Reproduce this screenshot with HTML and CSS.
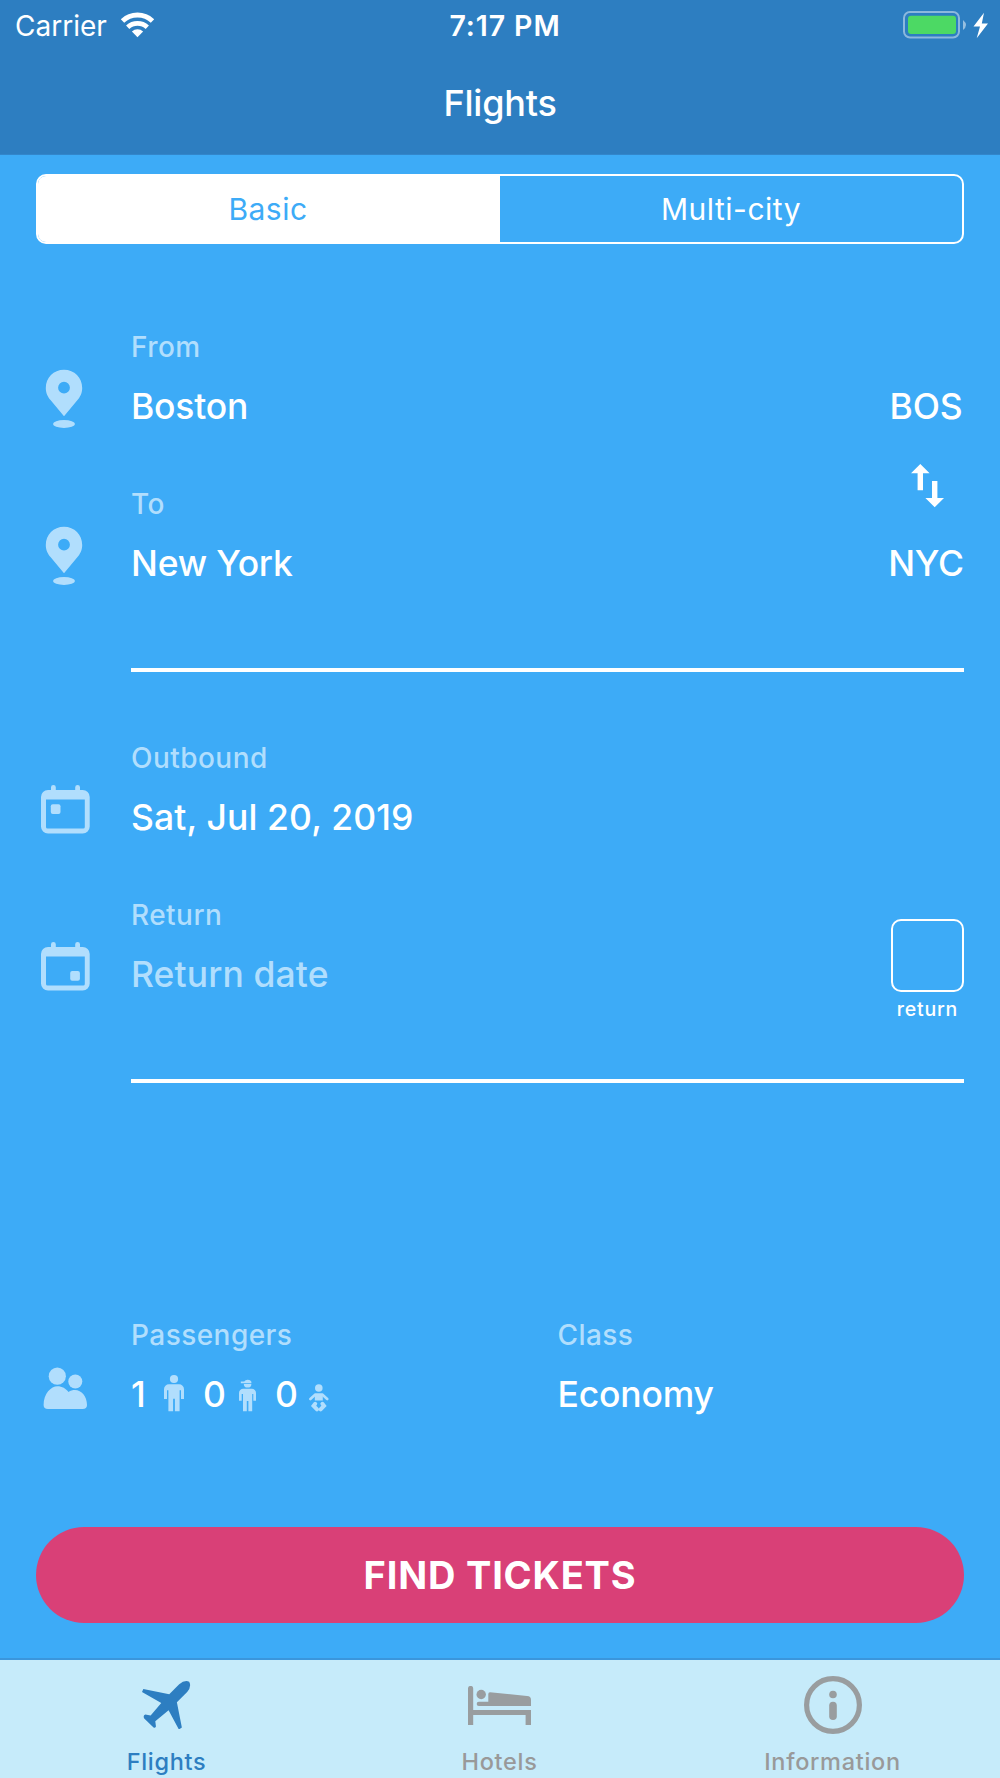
FILE: index.html
```html
<!DOCTYPE html>
<html lang="en">
<head>
  <meta charset="UTF-8">
  <meta name="viewport" content="width=device-width, initial-scale=1.0">
  <title>Flights</title>
  <link rel="stylesheet" href="styles.css">
</head>
<body>
  <header class="header">
    <div class="status-bar">
      <div class="status-left">
        <span class="carrier">Carrier</span>
        <svg class="wifi" width="35" height="26" viewBox="0 0 35 26">
          <path d="M2.5 9A22 22 0 0 1 32.5 9" fill="none" stroke="#fff" stroke-width="5"/>
          <path d="M7.7 15.2A14.4 14.4 0 0 1 27.3 15.2" fill="none" stroke="#fff" stroke-width="4.8"/>
          <path d="M17.5 25.3L11.9 19.4A8.5 8.5 0 0 1 23.1 19.4Z" fill="#fff"/>
        </svg>
      </div>
      <span class="clock">7:17 PM</span>
      <div class="status-right">
        <svg width="86" height="28" viewBox="0 0 86 28">
          <rect x="1" y="1" width="55" height="25.5" rx="6" fill="none" stroke="#fff" stroke-opacity=".45" stroke-width="2"/>
          <rect x="5" y="4.7" width="48" height="18.3" rx="3" fill="#4cd964"/>
          <path d="M60 9Q66 14 60 19Z" fill="#fff" fill-opacity=".5"/>
          <path d="M81 1.7L70.5 15.5H77L73.7 27.3L85 12.5H78.8Z" fill="#fff"/>
        </svg>
      </div>
    </div>
    <h1 class="title">Flights</h1>
  </header>

  <main class="content">
    <div class="segmented">
      <button class="segment active">Basic</button>
      <button class="segment">Multi-city</button>
    </div>

    <section class="group places">
      <div class="rows">
        <div class="row">
          <svg class="row-icon" viewBox="0 0 64 64">
            <path fill-rule="evenodd" d="M28 2.7C17.5 2.7 9.8 10.8 9.8 20.9C9.8 26.5 12 29.8 14.5 33L28 49.3L41.5 33C44 29.8 46.2 26.5 46.2 20.9C46.2 10.8 38.5 2.7 28 2.7ZM28 14.8A5.9 5.9 0 1 1 28 26.6A5.9 5.9 0 1 1 28 14.8Z"/>
            <ellipse cx="28" cy="57" rx="11" ry="3.9"/>
          </svg>
          <div class="field">
            <span class="label">From</span>
            <span class="value">Boston</span>
          </div>
        </div>
        <div class="row">
          <svg class="row-icon" viewBox="0 0 64 64">
            <path fill-rule="evenodd" d="M28 2.7C17.5 2.7 9.8 10.8 9.8 20.9C9.8 26.5 12 29.8 14.5 33L28 49.3L41.5 33C44 29.8 46.2 26.5 46.2 20.9C46.2 10.8 38.5 2.7 28 2.7ZM28 14.8A5.9 5.9 0 1 1 28 26.6A5.9 5.9 0 1 1 28 14.8Z"/>
            <ellipse cx="28" cy="57" rx="11" ry="3.9"/>
          </svg>
          <div class="field">
            <span class="label">To</span>
            <span class="value">New York</span>
          </div>
        </div>
      </div>
      <div class="codes">
        <span class="code">BOS</span>
        <svg class="swap" width="34" height="44" viewBox="0 0 34 44">
          <path d="M9.3 0L18.6 9.3H12V26.3H6.6V9.3H0Z"/>
          <path d="M23.7 43.3L14.4 34H21V17H26.4V34H33Z"/>
        </svg>
        <span class="code">NYC</span>
      </div>
    </section>

    <hr class="line">

    <section class="group dates">
      <div class="rows">
        <div class="row">
          <svg class="row-icon" viewBox="0 0 64 64">
            <path fill-rule="evenodd" d="M12 13H15V10.3A2.4 2.4 0 0 1 19.8 10.3V13H39.2V10.3A2.4 2.4 0 0 1 44 10.3V13H46.7A7 7 0 0 1 53.7 20V49.5A7 7 0 0 1 46.7 56.5H12A7 7 0 0 1 5 49.5V20A7 7 0 0 1 12 13ZM10 22.5V50A1.5 1.5 0 0 0 11.5 51.5H47.3A1.5 1.5 0 0 0 48.8 50V22.5Z"/>
            <rect x="14.8" y="27.3" width="9.7" height="9.7" rx="2"/>
          </svg>
          <div class="field">
            <span class="label">Outbound</span>
            <span class="value date">Sat, Jul 20, 2019</span>
          </div>
        </div>
        <div class="row">
          <svg class="row-icon" viewBox="0 0 64 64">
            <path fill-rule="evenodd" d="M12 13H15V10.3A2.4 2.4 0 0 1 19.8 10.3V13H39.2V10.3A2.4 2.4 0 0 1 44 10.3V13H46.7A7 7 0 0 1 53.7 20V49.5A7 7 0 0 1 46.7 56.5H12A7 7 0 0 1 5 49.5V20A7 7 0 0 1 12 13ZM10 22.5V50A1.5 1.5 0 0 0 11.5 51.5H47.3A1.5 1.5 0 0 0 48.8 50V22.5Z"/>
            <rect x="34.2" y="37" width="9.7" height="9.7" rx="2"/>
          </svg>
          <div class="field">
            <span class="label">Return</span>
            <span class="value date placeholder">Return date</span>
          </div>
        </div>
      </div>
      <div class="return-toggle">
        <span class="checkbox"></span>
        <span class="checkbox-label">return</span>
      </div>
    </section>

    <hr class="line">

    <section class="group details">
      <div class="row passengers">
        <svg class="row-icon" viewBox="0 0 64 64">
          <circle cx="21.3" cy="21.2" r="8.6"/>
          <circle cx="39.3" cy="26.5" r="7"/>
          <path d="M12 54C9 54 7.6 52.7 7.6 50C7.6 38.5 15 31.2 21.5 31.2C26 31.2 30 33.5 32.5 37C34.5 35.6 36.7 35 39 35C45.5 35 51 41.5 51 50C51 52.7 49.5 54 46.5 54Z"/>
        </svg>
        <div class="field">
          <span class="label">Passengers</span>
          <div class="value counts">
            <span>1</span>
            <svg width="20" height="44" viewBox="0 0 20 44">
              <circle cx="10" cy="7" r="4.1"/>
              <path d="M5 12.3H15A5 5 0 0 1 20 17.3V27H17V18.3H15.6V39.2H10.9V26.7H9.1V39.2H4.4V18.3H3V27H0V17.3A5 5 0 0 1 5 12.3Z"/>
            </svg>
            <span>0</span>
            <svg width="20" height="44" viewBox="0 0 20 44">
              <path d="M5.2 9.4A4 3.4 0 0 1 12.4 9.8V11.2H1.8V9.4Z"/>
              <path d="M4.8 11.9H12.4A3.8 3.7 0 0 1 4.8 11.9Z"/>
              <path d="M4.2 16.7H12.8A4.2 4.2 0 0 1 17 20.9V28.7H14.3V21.9H13.2V39.2H9.4V29H7.8V39.2H4V21.9H2.7V28.7H0V20.9A4.2 4.2 0 0 1 4.2 16.7Z"/>
            </svg>
            <span>0</span>
            <svg width="20" height="44" viewBox="0 0 20 44">
              <circle cx="9.8" cy="16" r="3.8"/>
              <path d="M1.4 27L6 22.7H13.6L18.2 27" class="limb"/>
              <path d="M5.8 21.5H13.8V28.5H5.8Z"/>
              <path d="M6.2 31.8L4.6 33.8L8 37.4M13.4 31.8L15 33.8L11.6 37.4" class="leg"/>
            </svg>
          </div>
        </div>
      </div>
      <div class="field">
        <span class="label">Class</span>
        <span class="value">Economy</span>
      </div>
    </section>

    <button class="find-button">FIND TICKETS</button>
  </main>

  <nav class="tab-bar">
    <a class="tab active">
      <span class="tab-icon">
        <svg width="48.5" height="48.5" viewBox="0 0 146 146">
          <path d="M4 24L82 40L112 10Q128 -4 142 2Q150 16 136 33L105 64L120 140L111 146L80 88L40 121L42 137Q39 143 34 139L6 112Q3 103 10 101L26 104L58 66L0 33Z"/>
        </svg>
      </span>
      <span class="tab-label">Flights</span>
    </a>
    <a class="tab">
      <span class="tab-icon">
        <svg width="63" height="39" viewBox="0 0 63 39">
          <path d="M0 39V2.5A2.6 2.6 0 0 1 5.2 2.5V24H63V39H57.6V29H5.2V39Z"/>
          <circle cx="13.2" cy="8.5" r="4.7"/>
          <path d="M10.8 15.8H20.3V8A1.7 1.7 0 0 1 22 6.3L59 10A4 4 0 0 1 63 14V20H10.8A2.1 2.1 0 0 1 10.8 15.8Z"/>
        </svg>
      </span>
      <span class="tab-label">Hotels</span>
    </a>
    <a class="tab">
      <span class="tab-icon">
        <svg width="58" height="58" viewBox="0 0 58 58">
          <circle cx="29" cy="29" r="26.4" fill="none" stroke="#999d9f" stroke-width="5.2"/>
          <circle cx="29" cy="18.5" r="3.8"/>
          <rect x="25.2" y="25.7" width="7.6" height="18.3" rx="3.8"/>
        </svg>
      </span>
      <span class="tab-label">Information</span>
    </a>
  </nav>
</body>
</html>
```

FILE: styles.css
```css
* {
  box-sizing: border-box;
}
body {
  margin: 0;
  width: 1000px;
  height: 1778px;
  display: flex;
  flex-direction: column;
  overflow: hidden;
  font-family: Inter, "Liberation Sans", sans-serif;
  background: #3dabf7;
  color: #fff;
}
svg {
  display: block;
}
button {
  font-family: inherit;
  border: none;
  padding: 0;
}

/* header */
.header {
  height: 155px;
  background: #2d7ec1;
  border-bottom: 1px solid #3286cb;
}
.status-bar {
  height: 50px;
  display: grid;
  grid-template-columns: 1fr auto 1fr;
  padding: 0 11px 0 15px;
  font-size: 28px;
  line-height: 52px;
}
.status-left {
  display: flex;
  gap: 13px;
}
.wifi {
  margin-top: 12px;
}
.clock {
  font-size: 28.5px;
  font-weight: 600;
  letter-spacing: 0.9px;
  padding-left: 6px;
}
.status-right {
  display: flex;
  justify-content: flex-end;
  padding-top: 10.5px;
}
.title {
  margin: 31px 0 0;
  font-size: 36px;
  line-height: 44px;
  font-weight: 500;
  letter-spacing: -0.2px;
  text-align: center;
}

/* form */
.content {
  flex: 1;
  padding: 19px 36px 0;
}
.segmented {
  display: flex;
  height: 70px;
  border: 2px solid #fff;
  border-radius: 10px;
  overflow: hidden;
}
.segment {
  width: 50%;
  font-size: 30px;
  letter-spacing: 0.5px;
  color: #fff;
  background: transparent;
}
.segment.active {
  padding-right: 2px;
  color: #3dabf7;
  background: #fff;
}
.group {
  display: flex;
}
.places {
  margin-top: 83px;
}
.dates {
  margin-top: 65.5px;
}
.details {
  margin-top: 232.5px;
}
.rows {
  flex: 1;
}
.row {
  display: flex;
  height: 157px;
}
.row-icon {
  width: 64px;
  height: 64px;
  margin: 39.5px 31px 0 0;
  fill: #b1defd;
}
.field {
  display: flex;
  flex-direction: column;
  gap: 17px;
}
.label {
  font-size: 28px;
  line-height: 40px;
  font-weight: 450;
  letter-spacing: 0.45px;
  color: #b1defd;
}
.value {
  font-size: 35.5px;
  line-height: 46px;
  font-weight: 450;
  letter-spacing: -0.2px;
}
.date {
  letter-spacing: 0.1px;
}
.placeholder {
  color: #b1defd;
}
.codes {
  width: 73px;
  padding-top: 57px;
  display: flex;
  flex-direction: column;
  align-items: center;
}
.code {
  font-size: 35.5px;
  line-height: 46px;
  font-weight: 450;
  letter-spacing: -0.2px;
  padding-right: 3px;
}
.swap {
  margin: 34px 0 33px;
  fill: #fff;
}
.return-toggle {
  width: 73px;
  padding-top: 181.5px;
  display: flex;
  flex-direction: column;
  align-items: center;
}
.checkbox {
  width: 73px;
  height: 73px;
  border: 2px solid #fff;
  border-radius: 10px;
}
.checkbox-label {
  margin-top: 4px;
  font-size: 19.5px;
  line-height: 26px;
  font-weight: 450;
  letter-spacing: 0.8px;
}
.line {
  margin: 27px 0 0 94.5px;
  height: 4px;
  border: none;
  background: #fff;
}
.passengers {
  width: 521.5px;
}
.counts {
  display: grid;
  grid-template-columns: 33px 39px 36px 36px 34px 20px;
  fill: #b1defd;
}
.limb,
.leg {
  fill: none;
  stroke: #b1defd;
  stroke-width: 2.6;
  stroke-linecap: round;
}
.leg {
  stroke-width: 4;
}
.find-button {
  display: block;
  width: 100%;
  height: 96px;
  margin-top: 55px;
  border-radius: 48px;
  background: #d94077;
  color: #fff;
  font-size: 38px;
  font-weight: 700;
  letter-spacing: 0.8px;
}

/* tab bar */
.tab-bar {
  height: 120px;
  display: flex;
  border-top: 2px solid #3b96dc;
  background: #c6ebfa;
  padding: 16px 1px 0 0;
}
.tab {
  flex: 1;
  display: flex;
  flex-direction: column;
  align-items: center;
  color: #999;
  fill: #999d9f;
}
.tab.active {
  color: #2d7ec1;
  fill: #2d7ec1;
}
.tab-icon {
  height: 58px;
  display: flex;
  align-items: center;
}
.tab-label {
  margin-top: 12px;
  font-size: 23.5px;
  line-height: 31px;
  font-weight: 450;
  letter-spacing: 0.7px;
}
```
